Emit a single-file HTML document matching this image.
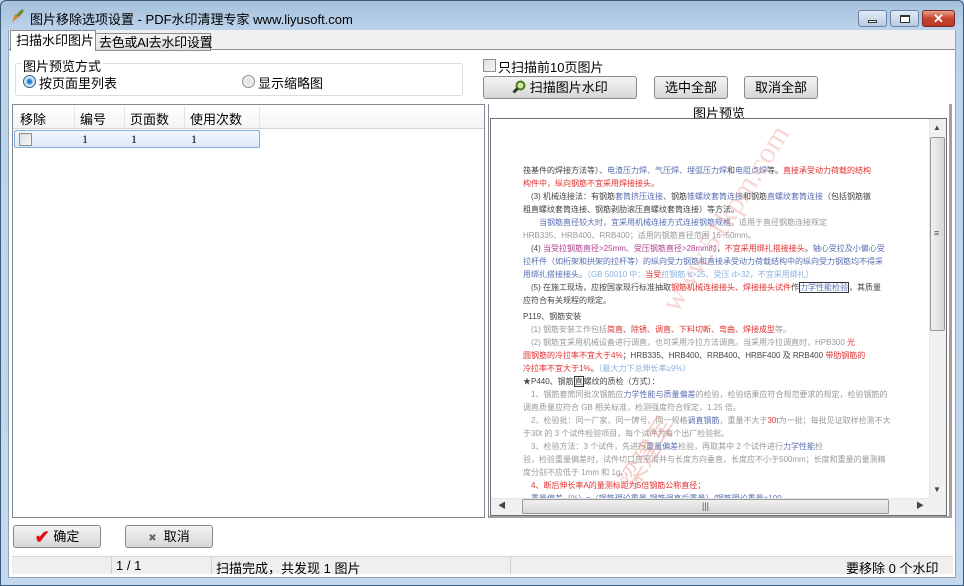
<!DOCTYPE html>
<html><head><meta charset="utf-8">
<style>
*{margin:0;padding:0;box-sizing:border-box}
body{width:964px;height:586px;overflow:hidden;background:#b9d1ea;font-family:"Liberation Sans","Noto Sans CJK SC","WenQuanYi Zen Hei",sans-serif;font-size:12px;color:#000;position:relative}
.a{position:absolute;white-space:nowrap}
.btn{position:absolute;border:1px solid #8a8a8a;border-radius:3px;background:linear-gradient(#f4f4f4,#e6e6e6 50%,#d6d6d6);text-align:center;line-height:21px;font-size:13px;white-space:nowrap}
.cb{position:absolute;width:13px;height:13px;border:1px solid #8e8f8f;background:linear-gradient(135deg,#dcdcdc,#f8f8f8)}
.doc{position:absolute;left:523px;font-size:8px;line-height:13px;white-space:nowrap;color:#444;letter-spacing:0}
.r{color:#e03030}.b{color:#5a6eb0}.l{color:#8ab0e0}.g{color:#999}
</style></head><body>
<div class="a" style="left:0;top:0;width:964px;height:586px;border:1px solid #3c5a7a;border-radius:6px 6px 0 0;background:linear-gradient(#a6c0dc 0,#bcd3ea 30px,#c4d9ee 100%)"></div>
<div class="a" style="left:9px;top:8px;width:16px;height:16px">
<svg width="16" height="16"><path d="M3 14 L6 6 L10 9 Z" fill="#d9822b"/><path d="M7 7 L13 1 L15 3 L10 9Z" fill="#6b8e23"/></svg></div>
<div class="a" style="left:30px;top:9px;font-size:13px">图片移除选项设置 - PDF水印清理专家 www.liyusoft.com</div>
<div class="a" style="left:858px;top:10px;width:29px;height:17px;border:1px solid #6d84a6;border-radius:3px;background:linear-gradient(#e0ebf6,#b8cbe2)"><div class="a" style="left:9px;top:9px;width:9px;height:3px;border:1px solid #333;background:#fff"></div></div>
<div class="a" style="left:890px;top:10px;width:29px;height:17px;border:1px solid #6d84a6;border-radius:3px;background:linear-gradient(#e0ebf6,#b8cbe2)"><div class="a" style="left:9px;top:4px;width:10px;height:8px;border:1px solid #333;border-top-width:2px;background:#fff"></div></div>
<div class="a" style="left:922px;top:10px;width:33px;height:17px;border:1px solid #7a2a22;border-radius:3px;background:linear-gradient(#e8a090,#c8452f 50%,#b83a24);color:#fff;font-weight:bold;text-align:center;line-height:15px;font-size:13px">✕</div>
<div class="a" style="left:8px;top:30px;width:948px;height:548px;background:#fff;border:1px solid #8ea4bd"></div>
<div class="a" style="left:9px;top:30px;width:946px;height:20px;background:#f0f0f0;border-bottom:1px solid #898c95"></div>
<div class="a" style="left:10px;top:30px;width:86px;height:21px;background:#fff;border:1px solid #898c95;border-bottom:none;font-size:13px;line-height:20px;padding-left:5px">扫描水印图片</div>
<div class="a" style="left:95px;top:33px;width:116px;height:18px;background:linear-gradient(#f2f2f2,#e0e0e0);border:1px solid #898c95;font-size:13px;line-height:17px;padding-left:3px;letter-spacing:-0.3px">去色或AI去水印设置</div>
<div class="a" style="left:15px;top:63px;width:448px;height:33px;border:1px solid #d5dfe5;border-radius:3px"></div>
<div class="a" style="left:21px;top:56px;background:#fff;padding:0 2px;font-size:13px">图片预览方式</div>
<div class="a" style="left:23px;top:75px;width:13px;height:13px;border-radius:50%;border:1px solid #2c628b;background:radial-gradient(circle,#1e6fc8 0,#3a8ee0 30%,#cfe2f5 45%,#e8eef4 100%)"></div>
<div class="a" style="left:39px;top:73px;font-size:13px">按页面里列表</div>
<div class="a" style="left:242px;top:75px;width:13px;height:13px;border-radius:50%;border:1px solid #8e8f8f;background:radial-gradient(circle,#e0e0e0,#f6f6f6)"></div>
<div class="a" style="left:258px;top:73px;font-size:13px">显示缩略图</div>
<div class="cb" style="left:483px;top:59px"></div>
<div class="a" style="left:498px;top:57px;font-size:13px">只扫描前10页图片</div>
<div class="btn" style="left:483px;top:76px;width:154px;height:23px"><svg width="14" height="14" style="vertical-align:-2px"><circle cx="8.5" cy="5.5" r="4" fill="#cfe8a0" stroke="#4a7a20" stroke-width="2"/><path d="M5.5 8.5 L1.5 12.5" stroke="#333" stroke-width="3"/></svg> 扫描图片水印</div>
<div class="btn" style="left:654px;top:76px;width:74px;height:23px">选中全部</div>
<div class="btn" style="left:744px;top:76px;width:74px;height:23px">取消全部</div>
<div class="a" style="left:12px;top:104px;width:473px;height:414px;border:1px solid #828790;background:#fff"></div>
<div class="a" style="left:13px;top:105px;width:471px;height:24px;background:linear-gradient(#fff,#f3f4f6);border-bottom:1px solid #d5d5d5"></div>
<div class="a" style="left:74px;top:106px;width:1px;height:22px;background:#e3e4e6"></div>
<div class="a" style="left:124px;top:106px;width:1px;height:22px;background:#e3e4e6"></div>
<div class="a" style="left:184px;top:106px;width:1px;height:22px;background:#e3e4e6"></div>
<div class="a" style="left:259px;top:106px;width:1px;height:22px;background:#e3e4e6"></div>
<div class="a" style="left:20px;top:109px;font-size:13px">移除</div>
<div class="a" style="left:80px;top:109px;font-size:13px">编号</div>
<div class="a" style="left:130px;top:109px;font-size:13px">页面数</div>
<div class="a" style="left:190px;top:109px;font-size:13px">使用次数</div>
<div class="a" style="left:14px;top:130px;width:246px;height:18px;border:1px solid #84acdd;border-radius:2px;background:linear-gradient(#f2f7fd,#dce9f8)"></div>
<div class="cb" style="left:19px;top:133px"></div>
<div class="a" style="left:82px;top:132px;font-family:'Liberation Serif',serif">1</div>
<div class="a" style="left:131px;top:132px;font-family:'Liberation Serif',serif">1</div>
<div class="a" style="left:191px;top:132px;font-family:'Liberation Serif',serif">1</div>
<div class="a" style="left:488px;top:104px;width:464px;height:414px;border-left:1px solid #828790;border-right:3px solid #a0a0a0;border-bottom:2px solid #a0a0a0;background:#fff"></div>
<div class="a" style="left:693px;top:103px;font-size:13px">图片预览</div>
<div class="a" style="left:490px;top:118px;width:457px;height:398px;border:1px solid #6e6e6e;background:#fff"></div>
<div class="a" style="left:0;top:0;width:964px;height:586px;clip-path:inset(119px 35px 88px 491px)">
<div class="doc" style="top:164px">筏基件的焊接方法等）、<span class="b">电渣压力焊、气压焊、埋弧压力焊</span>和<span class="b">电阻点焊</span>等。<span class="r">直接承受动力荷载的结构</span></div>
<div class="doc r" style="top:177px">构件中，纵向钢筋不宜采用焊接接头。</div>
<div class="doc" style="top:190px">　(3) 机械连接法：有钢筋<span class="b">套筒挤压连接</span>、钢筋<span class="b">锥螺纹套筒连接</span>和钢筋<span class="b">直螺纹套筒连接</span>（包括钢筋镦</div>
<div class="doc" style="top:203px">粗直螺纹套筒连接、钢筋剥肋滚压直螺纹套筒连接）等方法。</div>
<div class="doc g" style="top:216px">　　<span class="b">当钢筋直径较大时，宜采用机械连接方式连接钢筋规格</span>，适用于直径钢筋连接规定</div>
<div class="doc g" style="top:229px">HRB335、HRB400、RRB400；适用的钢筋直径范围 16~50mm。</div>
<div class="doc" style="top:242px">　(4) <span style="color:#b04090">当受拉钢筋直径&gt;25mm、受压钢筋直径&gt;28mm时</span>，<span class="r">不宜采用绑扎搭接接头</span>。<span class="b">轴心受拉及小偏心受</span></div>
<div class="doc b" style="top:255px">拉杆件（如桁架和拱架的拉杆等）的纵向受力钢筋和直接承受动力荷载结构中的纵向受力钢筋均不得采</div>
<div class="doc b" style="top:268px">用绑扎搭接接头。<span class="l">（GB 50010 中：</span><span class="r">当受</span><span class="l">拉钢筋 d&gt;25、受压 d&gt;32，不宜采用绑扎）</span></div>
<div class="doc" style="top:281px">　(5) 在施工现场，应按国家现行标准抽取<span class="r">钢筋机械连接接头、焊接接头试件</span>作<span class="b" style="border:1px solid #333">力学性能检验</span>，其质量</div>
<div class="doc" style="top:294px">应符合有关规程的规定。</div>
<div class="doc" style="top:310px">P119、钢筋安装</div>
<div class="doc g" style="top:323px">　(1) 钢筋安装工作包括<span class="r">简直、除锈、调直、下料切断、弯曲、焊接成型</span>等。</div>
<div class="doc g" style="top:336px">　(2) 钢筋宜采用机械设备进行调直，也可采用冷拉方法调直。当采用冷拉调直时，HPB300 <span class="r">光</span></div>
<div class="doc" style="top:349px"><span class="r">圆钢筋的冷拉率不宜大于4%</span>；HRB335、HRB400、RRB400、HRBF400 及 RRB400 <span class="r">带肋钢筋的</span></div>
<div class="doc" style="top:362px"><span class="r">冷拉率不宜大于1%</span>。<span class="l">（最大力下总伸长率≥9%）</span></div>
<div class="doc" style="top:375px">★P440、钢筋<span style="border:1px solid #333">直</span>螺纹的质检（方式）：</div>
<div class="doc g" style="top:388px">　1、钢筋套筒同批次钢筋应<span class="b">力学性能与质量偏差</span>的检验，检验结果应符合规范要求的规定，检验钢筋的</div>
<div class="doc g" style="top:401px">调直质量应符合 GB 相关标准，检测强度符合规定，1.25 倍。</div>
<div class="doc g" style="top:414px">　2、检验批：同一厂家、同一牌号、同一规格<span class="b">调直钢筋</span>，重量不大于<span class="r">30t</span>为一批；每批见证取样检测不大</div>
<div class="doc g" style="top:427px">于30t 的 3 个试件检验项目，每个试件为每个出厂检验批。</div>
<div class="doc g" style="top:440px">　3、检验方法：3 个试件，先进行<span class="b">重量偏差</span>检验，再取其中 2 个试件进行<span class="b">力学性能</span>检</div>
<div class="doc g" style="top:453px">验，检验重量偏差时，试件切口应平滑并与长度方向垂直，长度应不小于500mm；长度和重量的量测精</div>
<div class="doc g" style="top:466px">度分别不应低于 1mm 和 1g。</div>
<div class="doc r" style="top:479px">　4、断后伸长率A的量测标距为5倍钢筋公称直径；</div>
<div class="doc b" style="top:492px">　重量偏差（%）=（钢筋理论重量-钢筋调直后重量）/钢筋理论重量×100</div>
<div class="a" style="left:655px;top:300px;transform:rotate(-58deg);transform-origin:left top;color:rgba(230,140,130,0.35);font-size:30px;font-family:'Liberation Serif',serif">www.51kpm.com</div>
<div class="a" style="left:610px;top:475px;transform:rotate(-58deg);transform-origin:left top;color:rgba(230,130,120,0.4);font-size:26px">梁建军</div>
</div>
<div class="a" style="left:929px;top:119px;width:17px;height:379px;background:#f0f0f0;border-left:1px solid #e6e6e6"></div>
<div class="a" style="left:933px;top:123px;font-size:8px;color:#444">▲</div>
<div class="a" style="left:930px;top:137px;width:15px;height:194px;border:1px solid #999;border-radius:2px;background:linear-gradient(90deg,#f0f0f0,#d8d8d8)"></div>
<div class="a" style="left:934px;top:228px;font-size:9px;color:#555">≡</div>
<div class="a" style="left:933px;top:485px;font-size:8px;color:#444">▼</div>
<div class="a" style="left:491px;top:498px;width:455px;height:17px;background:#f0f0f0;border-top:1px solid #e6e6e6"></div>
<div class="a" style="left:498px;top:500px;font-size:8px;color:#444">◀</div>
<div class="a" style="left:522px;top:499px;width:367px;height:15px;border:1px solid #999;border-radius:2px;background:linear-gradient(#f0f0f0,#d8d8d8);text-align:center;font-size:9px;line-height:12px;color:#555">|||</div>
<div class="a" style="left:916px;top:500px;font-size:8px;color:#444">▶</div>
<div class="a" style="left:929px;top:498px;width:17px;height:17px;background:#f0f0f0"></div>
<div class="btn" style="left:13px;top:525px;width:88px;height:23px"><span style="color:#e01010;font-size:18px;font-weight:bold;line-height:18px;vertical-align:-2px">✔</span> 确定</div>
<div class="btn" style="left:125px;top:525px;width:88px;height:23px"><span style="color:#666;font-size:10px">✖</span>&nbsp; 取消</div>
<div class="a" style="left:12px;top:556px;width:941px;height:18px;background:#f0eeee;border-top:1px solid #d8d8d8"></div>
<div class="a" style="left:111px;top:557px;width:1px;height:17px;background:#cfcfcf"></div>
<div class="a" style="left:211px;top:557px;width:1px;height:17px;background:#cfcfcf"></div>
<div class="a" style="left:510px;top:557px;width:1px;height:17px;background:#cfcfcf"></div>
<div class="a" style="left:116px;top:558px;font-size:13px">1 / 1</div>
<div class="a" style="left:216px;top:558px;font-size:13px">扫描完成，共发现 1 图片</div>
<div class="a" style="left:846px;top:558px;font-size:13px">要移除 0 个水印</div>
</body></html>
